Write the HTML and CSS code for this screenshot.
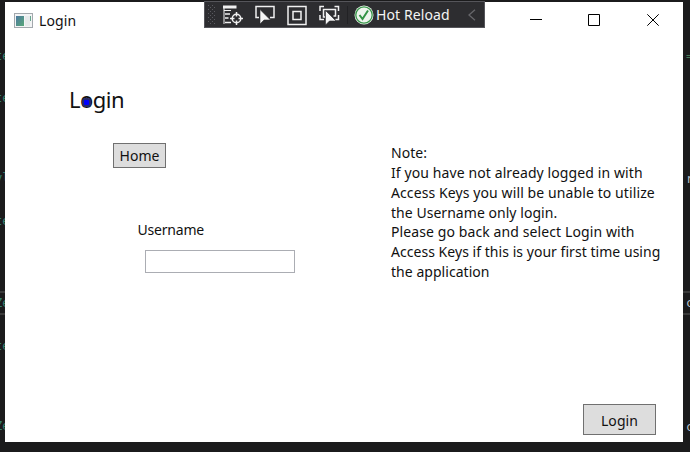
FILE: index.html
```html
<!DOCTYPE html>
<html lang="en">
<head>
<meta charset="utf-8">
<title>Login</title>
<link rel="stylesheet" href="styles.css">
</head>
<body>
<div class="desktop">
  <div class="gutter gutter-left">
    <span class="code l1">te</span><span class="code l2">te</span><span class="code l3">yl</span><span class="code l4">te</span><span class="code active l5">Ze</span><span class="code l6">te</span><span class="code l7">Ze</span>
  </div>
  <main class="window">
    <header class="titlebar">
      <svg class="app-icon" width="19" height="15" viewBox="0 0 19 15">
        <defs><linearGradient id="pane" x1="0" y1="0" x2="1" y2="1"><stop offset="0" stop-color="#4d78a0"/><stop offset="1" stop-color="#58a878"/></linearGradient></defs>
        <rect x=".5" y=".5" width="18" height="14" fill="#f3f4f5" stroke="#a3a8ad"/>
        <rect x="2" y="3" width="8" height="10" fill="url(#pane)"/>
        <rect x="11" y="3" width="5" height="10" fill="#e6eaeb"/>
        <path d="M16.5 3v5" stroke="#67a58e"/>
      </svg>
      <span class="caption">Login</span>
      <div class="controls">
        <svg width="12" height="12" viewBox="0 0 12 12"><path d="M0 5.5h12"/></svg>
        <svg width="12" height="12" viewBox="0 0 12 12"><path d="M.5 .5h11v11h-11z"/></svg>
        <svg class="close" width="12" height="12" viewBox="0 0 12 12"><path d="M.3 .3l11.4 11.4M11.7 .3L.3 11.7"/></svg>
      </div>
    </header>
    <section class="content">
      <div class="form">
        <h1 class="heading">Login</h1>
        <button class="button home">Home</button>
        <label class="label" for="username">Username</label>
        <input class="field" id="username" type="text">
      </div>
      <p class="note"><span>Note:</span><span class="wide">If you have not already logged in with</span><span class="wide">Access Keys you will be unable to utilize</span><span>the Username only login.</span><span class="wide">Please go back and select Login with</span><span>Access Keys if this is your first time using</span><span>the application</span></p>
    </section>
    <footer class="footer"><button class="button submit">Login</button></footer>
    <i class="adorner"></i>
  </main>
  <div class="gutter gutter-right">
    <span class="code r1">=</span><span class="code r2">r</span><span class="code active r3">c</span><span class="code r4">c</span>
  </div>
  <div class="debugbar">
    <svg class="tools" width="144" height="27" viewBox="0 0 144 27" fill="none">
      <g class="grip"><path d="M4.5 4v20M8.5 4v20"/><path d="M6.5 6v18M10.5 6v18"/></g>
      <g stroke="#f0f0f0" stroke-width="1.5">
        <path d="M19 6h13.500" stroke-width="3"/><path d="M20 7v16M20 9.500h7" stroke-width="1"/><path d="M21 13h5M21 17h3.500M21 21.500h6"/>
        <circle cx="32.5" cy="17.5" r="4.300"/><path d="M32.5 11v4.500M32.5 19.500v4.500M26 17.5h4.500M34.500 17.5h4.500"/>
        <path d="M55 16.500h-3v-11h18v11h-4"/>
        <path d="M84 5.500h18v18H84zM89 10.500h8v8h-8z"/>
        <path d="M116 10V5.500h4M130.500 5.500h4V10M134.500 14v4.500h-3M116 14v4.500h4"/>
        <path d="M121 16h-1.500V8.500h12V15h-2"/>
      </g>
      <path class="cursor" d="M56 8.500v14.500l4-4h6.500z"/>
      <path class="cursor" d="M121.500 9.500V24l4-4h6.500z"/>
      <path d="M143.500 5v18" stroke="#222225"/>
    </svg>
    <svg class="check" width="20" height="20" viewBox="0 0 20 20" fill="none">
      <circle cx="10" cy="10" r="9.500" fill="#edf5ed"/><circle cx="10" cy="10" r="8.200" stroke="#39964a" stroke-width="1.300"/>
      <path d="M5.500 10l3 4L14 5.500" stroke="#319344" stroke-width="2"/>
    </svg>
    <span class="reload">Hot Reload</span>
    <svg class="chevron" width="8" height="12" viewBox="0 0 8 12" fill="none"><path d="M7 .7L1 6l6 5.300" stroke="#66666a" stroke-width="1.300"/></svg>
  </div>
</div>
</body>
</html>
```
FILE: styles.css
```css
* { box-sizing: border-box; }
body { margin: 0; background: #1b1b1c; font-family: "Noto Sans", "Open Sans", sans-serif; font-size: 14px; color: #111; }
.desktop { position: relative; display: grid; grid-template-columns: 5px 678px 7px; width: 690px; height: 452px; padding: 2px 0 10px; overflow: hidden; }
.window { position: relative; display: flex; flex-direction: column; height: 440px; background: #fff; }
.gutter { display: flex; flex-direction: column; overflow: hidden; height: 440px; font: 12px/20px "DejaVu Sans Mono", monospace; color: #348070; }
.code { display: block; flex: none; height: 20px; white-space: nowrap; }
.gutter-left .code { text-indent: -5px; }
.active { box-shadow: 0 -2px #3a3a3a, 0 2px #3a3a3a; }
.l1 { margin-top: 44px; }
.l2 { margin-top: 22px; }
.l3 { margin-top: 60px; }
.l4 { margin-top: 23px; }
.l5 { margin-top: 62px; }
.l6 { margin-top: 23px; }
.l7 { margin-top: 60px; }
.gutter-right { color: #b8c4cd; }
.gutter-right .code { text-indent: 3px; }
.gutter-right .r1 { margin-top: 44px; color: #477957; }
.r2 { margin-top: 103px; }
.r3 { margin-top: 104px; }
.r4 { margin-top: 104px; }
.titlebar { display: flex; align-items: center; height: 36px; padding: 0 24px 0 9px; }
.caption { margin-left: 6px; letter-spacing: .1px; }
.controls { display: flex; gap: 46px; margin-left: auto; }
.controls svg { display: block; fill: none; stroke: #000; }
.controls .close { margin-left: 1px; }
.content { display: flex; flex: 1; }
.form { display: flex; flex-direction: column; align-items: flex-start; width: 386px; }
.heading { margin: 44px 0 0 64px; font-weight: 400; font-size: 22px; line-height: 34px; letter-spacing: -.5px; }
.button { padding: 0; border: 1px solid #707070; border-radius: 0; background: #ddd; color: #111; font: inherit; }
.home { width: 53px; height: 25px; margin: 27px 0 0 108px; letter-spacing: 0; }
.label { margin: 52px 0 0 132.500px; line-height: 20px; letter-spacing: -.2px; }
.field { width: 150px; height: 23px; margin: 10px 0 0 140px; padding: 0 3px; border: 1px solid #abadb3; background: #fff; font: inherit; }
.note { margin: 105px 0 0; line-height: 19.850px; white-space: nowrap; letter-spacing: .04px; }
.note span { display: block; }
.note .wide { letter-spacing: .1px; }
.footer { display: flex; justify-content: flex-end; padding: 0 27px 7px 0; }
.submit { width: 73px; height: 31px; padding-top: 1px; letter-spacing: .1px; }
.adorner { position: absolute; left: 77px; top: 96px; width: 9px; height: 9px; border: 2px solid #252a6b; border-radius: 3px; background: #00f; }
.debugbar { position: absolute; left: 204px; top: 1px; display: flex; align-items: center; width: 281px; height: 27px; background: #2d2d30; border: 1px solid #55555a; color: #f4f4f4; }
.tools { flex: none; margin-left: -1px; }
.grip { stroke: #5b5b60; stroke-dasharray: 1 3; }
.cursor { fill: #f5f5f5; stroke: #2d2d30; stroke-width: .6; }
.check { flex: none; margin-left: 6px; }
.reload { margin-left: 2px; white-space: nowrap; letter-spacing: .1px; }
.chevron { margin: 0 8px 0 auto; }
```
